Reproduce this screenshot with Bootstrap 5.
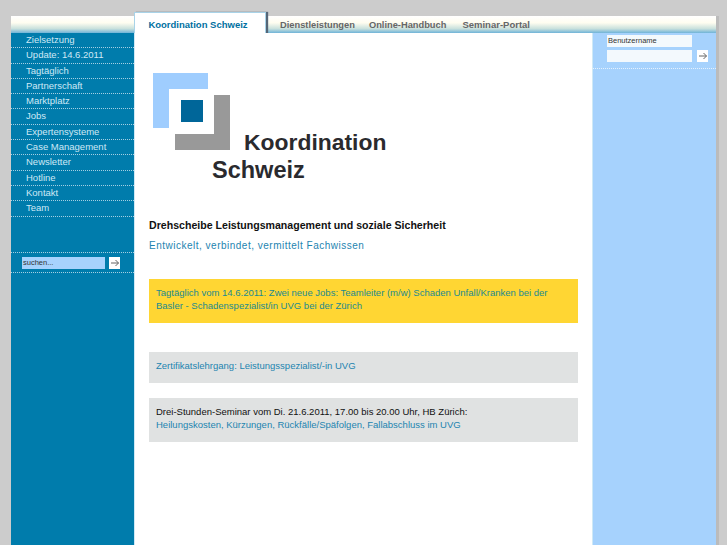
<!DOCTYPE html>
<html lang="de">
<head>
  <meta charset="UTF-8" />
  <title>Koordination Schweiz</title>
  <link href="https://cdn.jsdelivr.net/npm/bootstrap@5.3.3/dist/css/bootstrap.min.css" rel="stylesheet" />
  <style>
    html, body { height: 100%; overflow: hidden; }
    body {
      background: #ccc;
      font-family: "Liberation Sans", Arial, sans-serif;
      font-size: 9.5px;
      color: #111;
      padding: 16px 8px 0 11px;
    }
    a { color: #1d84b0; text-decoration: none; }
    .seite { width: 705px; height: 529px; box-shadow: 3px 0 0 #bbb; }
    .kopf {
      height: 17px;
      background: linear-gradient(#fff 0%, #fffdf0 40%, #c8e0dc 75%, #6fb3d8 100%);
      padding-left: 123px;
    }
    .reiter { margin-top: -4px; }
    .reiter a { color: #666; font-weight: 700; font-size: 9.3px; padding: 7px 7px 0; }
    .reiter a:last-child { margin-left: 2px; font-size: 9.5px; padding-top: 6px; }
    .reiter .aktiv {
      background: #fff;
      color: #00709f;
      font-size: 9.5px;
      width: 132px;
      height: 21px;
      text-align: center;
      padding: 5px 4px 0 0;
      margin-right: 7px;
      border: 1px solid #a9d3e8;
      border-bottom: 0;
      box-shadow: 2px 0 1px #567;
    }
    .spalten { height: 512px; }
    .links { width: 123px; background: #007cac; }
    .links a {
      display: block;
      height: 15.3px;
      line-height: 13px;
      padding-left: 15px;
      color: #cfe9f6;
      border-bottom: 1px dotted #a5cfe2;
    }
    .suche {
      margin-top: 35px;
      padding: 4px 0 3px 11px;
      border-top: 1px dotted #a5cfe2;
      border-bottom: 1px dotted #a5cfe2;
    }
    .feld { height: 12px; font-size: 7.5px; line-height: 12px; padding-left: 1px; color: #333; }
    .suche .feld { width: 83px; background: #a6d2fd; }
    .pfeil { width: 11px; height: 12px; background: #fff; margin-left: 4px; }
    .mitte { width: 459px; background: #fff; border-left: 1px solid #cfe9f6; border-right: 1px solid #cfe9f6; padding: 40px 14px 0 14px; }
    .logo { display: block; margin-bottom: 35px; }
    .logo text { font-family: "Liberation Sans", Arial, sans-serif; font-weight: 700; fill: #2a2a2e; }
    .titel { font-size: 10.6px; font-weight: 700; line-height: 14px; margin-bottom: 7px; }
    .sub { font-size: 10px; letter-spacing: .5px; line-height: 14px; margin-bottom: 26px; }
    .kasten { padding: 7px; line-height: 13px; }
    .gelb { background: #ffd633; height: 44px; margin-bottom: 29px; }
    .gelb a { color: #1c8a8f; }
    .grau { background: #e0e2e2; }
    .eins { height: 31px; margin-bottom: 15px; padding-top: 7px; }
    .zwei { height: 44px; }
    .rechts { width: 123px; background: #a6d2fd; }
    .anmeldung { padding: 2px 8px 6px 14px; border-bottom: 1px dotted #e4f1fd; height: 36px; }
    .anmeldung .feld { width: 85px; background: #f3f9fd; margin-bottom: 3px; }
    .anmeldung .pfeil { margin-left: 5px; }
  </style>
</head>
<body>
  <div class="seite">
    <div class="kopf d-flex">
      <nav class="reiter d-flex align-items-start">
        <a class="aktiv" href="#">Koordination Schweiz</a>
        <a href="#">Dienstleistungen</a>
        <a href="#">Online-Handbuch</a>
        <a href="#">Seminar-Portal</a>
      </nav>
    </div>
    <div class="spalten d-flex">
      <div class="links">
        <a href="#">Zielsetzung</a>
        <a href="#">Update: 14.6.2011</a>
        <a href="#">Tagtäglich</a>
        <a href="#">Partnerschaft</a>
        <a href="#">Marktplatz</a>
        <a href="#">Jobs</a>
        <a href="#">Expertensysteme</a>
        <a href="#">Case Management</a>
        <a href="#">Newsletter</a>
        <a href="#">Hotline</a>
        <a href="#">Kontakt</a>
        <a href="#">Team</a>
        <div class="suche d-flex">
          <div class="feld">suchen...</div>
          <div class="pfeil d-flex align-items-center justify-content-center">
            <svg width="10" height="8" viewBox="0 0 10 8"><path d="M1 4H8.500M5.500 1L8.500 4L5.500 7" fill="none" stroke="#666" stroke-width="1"/></svg>
          </div>
        </div>
      </div>
      <main class="mitte">
        <svg class="logo" width="240" height="110" viewBox="0 0 240 110">
          <path d="M4 0H59V16H20V55H4Z" fill="#9fcdfe"/>
          <rect x="32" y="27" width="22" height="22" fill="#006699"/>
          <path d="M65 22H81V77H26V61H65Z" fill="#999"/>
          <text x="95" y="76.500" font-size="22.900">Koordination</text>
          <text x="63" y="105" font-size="23.500">Schweiz</text>
        </svg>
        <div class="titel">Drehscheibe Leistungsmanagement und soziale Sicherheit</div>
        <div class="sub"><a href="#">Entwickelt, verbindet, vermittelt Fachwissen</a></div>
        <div class="kasten gelb"><a href="#">Tagtäglich vom 14.6.2011: Zwei neue Jobs: Teamleiter (m/w) Schaden Unfall/Kranken bei der Basler - Schadenspezialist/in UVG bei der Zürich</a></div>
        <div class="kasten grau eins"><a href="#">Zertifikatslehrgang: Leistungsspezialist/-in UVG</a></div>
        <div class="kasten grau zwei">Drei-Stunden-Seminar vom Di. 21.6.2011, 17.00 bis 20.00 Uhr, HB Zürich:<br><a href="#">Heilungskosten, Kürzungen, Rückfälle/Späfolgen, Fallabschluss im UVG</a></div>
      </main>
      <aside class="rechts">
        <div class="anmeldung">
          <div class="feld">Benutzername</div>
          <div class="d-flex">
            <div class="feld"></div>
            <div class="pfeil d-flex align-items-center justify-content-center">
              <svg width="10" height="8" viewBox="0 0 10 8"><path d="M1 4H8.500M5.500 1L8.500 4L5.500 7" fill="none" stroke="#666" stroke-width="1"/></svg>
            </div>
          </div>
        </div>
      </aside>
    </div>
  </div>
  <script src="https://cdn.jsdelivr.net/npm/bootstrap@5.3.3/dist/js/bootstrap.bundle.min.js"></script>
</body>
</html>
